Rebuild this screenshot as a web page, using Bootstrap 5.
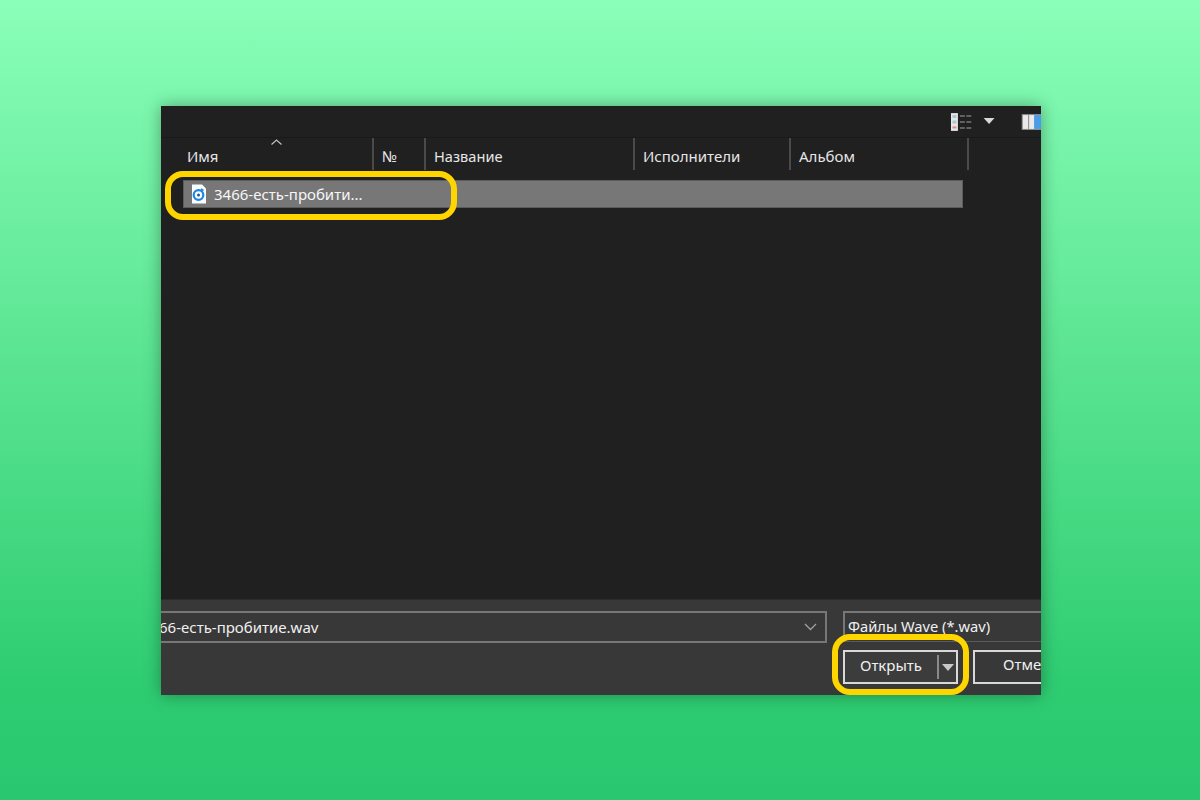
<!DOCTYPE html>
<html lang="ru">
<head>
<meta charset="utf-8">
<title>Открыть</title>
<link href="https://cdn.jsdelivr.net/npm/bootstrap@5.3.0/dist/css/bootstrap.min.css" rel="stylesheet">
<style>
html,body{height:100%;margin:0}
body{width:1200px;height:800px;overflow:hidden;background:linear-gradient(180deg,#8affb9 0%,#60e796 40%,#2fcd72 85%,#29c76f 100%);padding:106px 0 0 161px;font-family:"Noto Sans","Open Sans",sans-serif;color:#e8e8e8}
.dlg{position:relative;width:880px;height:589px;background:#202020;box-shadow:0 0 16px rgba(0,0,0,.35)}
.tbar{height:32px;border-bottom:1px solid #191919;padding-left:789px}
.cols{height:34px;font-size:15px;color:#e6e6e6}
.colh{border-right:2px solid #4a4a4a;height:32px;padding:7px 0 0 8px;white-space:nowrap;flex:none;line-height:22px}
.w-name{width:213px;padding-left:26px;position:relative}
.w-num{width:52px}.w-title{width:209px}.w-art{width:156px}.w-alb{width:178px}
.title-text{font-size:14.6px}
.sort-up{position:absolute;left:109px;top:0}
.listarea{height:427px;padding:8px 0 0 22px}
.selrow{width:780px;height:28px;background:#777;border:1px solid #5c5c5c;font-size:15px;color:#f6f6f6;padding-left:7px;gap:7px}
.foot{height:96px;background:#383838;border-top:1px solid #2b2b2b;position:relative}
.row1{padding-top:11px;height:44px}
.fname{width:666px;height:32px;border:2px solid #777;border-left:0;overflow:hidden;white-space:nowrap;font-size:15px;line-height:27px;padding-right:8px;color:#f0f0f0}
.fname span{margin-left:-2px}
.ftype{width:198px;height:31px;margin-left:16px;border:2px solid #777;border-right:0;border-bottom:1px solid #5a5a5a;font-size:14.7px;line-height:26px;padding-left:3px;color:#f0f0f0;white-space:nowrap}
.row2{padding:6px 0 0 682px}
.okbtn{width:115px;height:34px;border:2px solid #d8d8d8;font-size:15px;color:#f0f0f0;background:#3c3c3c;flex:none}
.oklabel{width:92px;text-align:center;margin-top:-3px}
.oksep{width:2px;height:24px;background:#8a8a8a}
.okarrow{flex:1;text-align:center}
.cancelbtn{width:68px;height:34px;margin-left:15px;border:2px solid #d8d8d8;border-right:0;font-size:15px;color:#f0f0f0;padding-left:28px;line-height:25px;overflow:hidden;white-space:nowrap;flex:none}
.ring{position:absolute;border:6px solid #ffd500;border-radius:18px;background:transparent}
.ring-a{left:4px;top:65px;width:292px;height:49px}
.ring-b{left:671px;top:528px;width:137px;height:61px}
</style>
</head>
<body>
<div class="dlg">
  <div class="tbar d-flex align-items-center">
    <svg width="92" height="24" viewBox="0 0 92 24">
      <rect x="1" y="3" width="7" height="18" fill="#e6e6e6"/>
      <rect x="2.500" y="5" width="4" height="3" fill="#a9c4d4"/><rect x="2.500" y="10.500" width="4" height="3" fill="#a9c4d4"/><rect x="2.500" y="16.500" width="4" height="2" fill="#d98a86"/>
      <path d="M10 6h5M10 12h5M10 18h5M16.500 6h5M16.500 12h5M16.500 18h5" stroke="#777" stroke-width="1.500"/>
      <path d="M34 8h11l-5.500 6z" fill="#d8d8d8"/>
      <rect x="73" y="4.500" width="19" height="15" fill="#e9e9e9" stroke="#8a8a8a" stroke-width="1"/>
      <rect x="79" y="5" width="1" height="14" fill="#888"/>
      <rect x="85" y="5" width="7" height="14" fill="#4a9be8"/>
    </svg>
  </div>
  <div class="cols d-flex">
    <div class="colh w-name">
      <svg class="sort-up" width="13" height="8" viewBox="0 0 13 8"><path d="M1.500 6.500 6.500 2l5 4.500" fill="none" stroke="#bdbdbd" stroke-width="1.300"/></svg>Имя</div>
    <div class="colh w-num">№</div>
    <div class="colh w-title"><span class="title-text">Название</span></div>
    <div class="colh w-art">Исполнители</div>
    <div class="colh w-alb">Альбом</div>
  </div>
  <div class="listarea">
    <div class="selrow d-flex align-items-center">
      <svg width="16" height="20" viewBox="0 0 16 20"><path d="M1 .5h10l4 4v15H1z" fill="#fbfcfd"/><circle cx="7.500" cy="11" r="4.800" fill="none" stroke="#1f86e0" stroke-width="2.200"/><circle cx="7.500" cy="11" r="1.500" fill="#155a9c"/><path d="M10 5l2.500 1.500" stroke="#1f86e0" stroke-width="1.500"/></svg>
      <span>3466-есть-пробити...</span>
    </div>
  </div>
  <div class="foot">
    <div class="row1 d-flex">
      <div class="fname d-flex justify-content-between align-items-center">
        <span>66-есть-пробитие.wav</span>
        <svg width="13" height="8" viewBox="0 0 13 8"><path d="M1 1l5.500 5.500L12 1" fill="none" stroke="#a0a0a0" stroke-width="1.300"/></svg>
      </div>
      <div class="ftype">Файлы Wave (*.wav)</div>
    </div>
    <div class="row2 d-flex">
      <div class="okbtn d-flex align-items-center">
        <div class="oklabel">Открыть</div>
        <div class="oksep"></div>
        <div class="okarrow"><svg class="d-block mx-auto" width="12" height="7" viewBox="0 0 12 7"><path d="M0 0h12L6 7z" fill="#c8c8c8"/></svg></div>
      </div>
      <div class="cancelbtn">Отмена</div>
    </div>
  </div>
  <div class="ring ring-a"></div>
  <div class="ring ring-b"></div>
</div>
<script src="https://cdn.jsdelivr.net/npm/bootstrap@5.3.0/dist/js/bootstrap.bundle.min.js"></script>
</body>
</html>
